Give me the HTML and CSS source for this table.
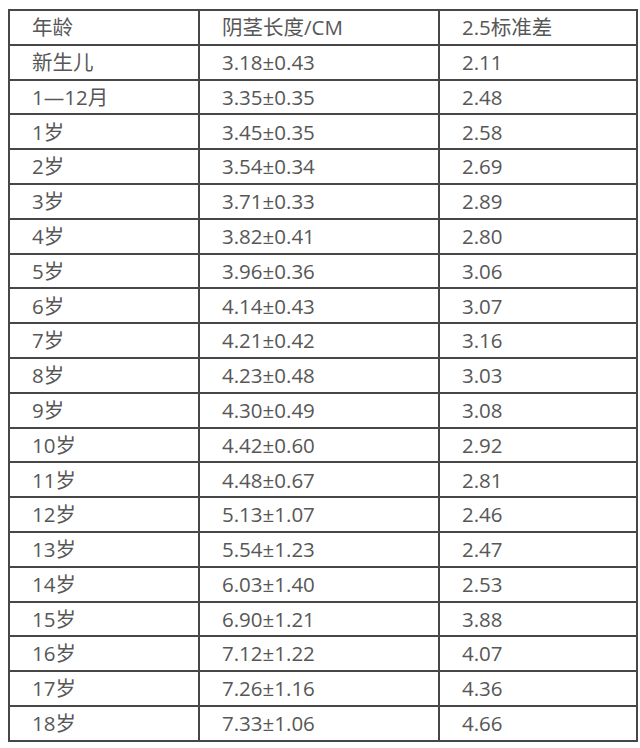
FILE: index.html
```html
<!DOCTYPE html>
<html lang="zh">
<head>
<meta charset="utf-8">
<link rel="stylesheet" href="styles.css">
</head>
<body>
<table class="data">
<colgroup><col class="c1"><col class="c2"><col class="c3"></colgroup>
<tr><td>年龄</td><td>阴茎长度/CM</td><td>2.5标准差</td></tr>
<tr><td>新生儿</td><td>3.18±0.43</td><td>2.11</td></tr>
<tr><td>1—12月</td><td>3.35±0.35</td><td>2.48</td></tr>
<tr><td>1岁</td><td>3.45±0.35</td><td>2.58</td></tr>
<tr><td>2岁</td><td>3.54±0.34</td><td>2.69</td></tr>
<tr><td>3岁</td><td>3.71±0.33</td><td>2.89</td></tr>
<tr><td>4岁</td><td>3.82±0.41</td><td>2.80</td></tr>
<tr><td>5岁</td><td>3.96±0.36</td><td>3.06</td></tr>
<tr><td>6岁</td><td>4.14±0.43</td><td>3.07</td></tr>
<tr><td>7岁</td><td>4.21±0.42</td><td>3.16</td></tr>
<tr><td>8岁</td><td>4.23±0.48</td><td>3.03</td></tr>
<tr><td>9岁</td><td>4.30±0.49</td><td>3.08</td></tr>
<tr><td>10岁</td><td>4.42±0.60</td><td>2.92</td></tr>
<tr><td>11岁</td><td>4.48±0.67</td><td>2.81</td></tr>
<tr><td>12岁</td><td>5.13±1.07</td><td>2.46</td></tr>
<tr><td>13岁</td><td>5.54±1.23</td><td>2.47</td></tr>
<tr><td>14岁</td><td>6.03±1.40</td><td>2.53</td></tr>
<tr><td>15岁</td><td>6.90±1.21</td><td>3.88</td></tr>
<tr><td>16岁</td><td>7.12±1.22</td><td>4.07</td></tr>
<tr><td>17岁</td><td>7.26±1.16</td><td>4.36</td></tr>
<tr><td>18岁</td><td>7.33±1.06</td><td>4.66</td></tr>
</table>
</body>
</html>
```
FILE: styles.css
```css
html, body {
  margin: 0;
  padding: 0;
  background: #ffffff;
}
body {
  padding: 9px 0 0 8px;
  font-family: "Open Sans", "Noto Sans CJK SC", sans-serif;
  color: #575757;
}
.data {
  border-collapse: collapse;
  table-layout: fixed;
  width: 628px;
}
.c1 { width: 190px; }
.c2 { width: 240px; }
.c3 { width: 198px; }
.data td {
  border: 2px solid #474747;
  height: 32.8px;
  padding: 0 0 0 22px;
  font-size: 20.5px;
  line-height: 1;
  vertical-align: middle;
  white-space: nowrap;
}
```
